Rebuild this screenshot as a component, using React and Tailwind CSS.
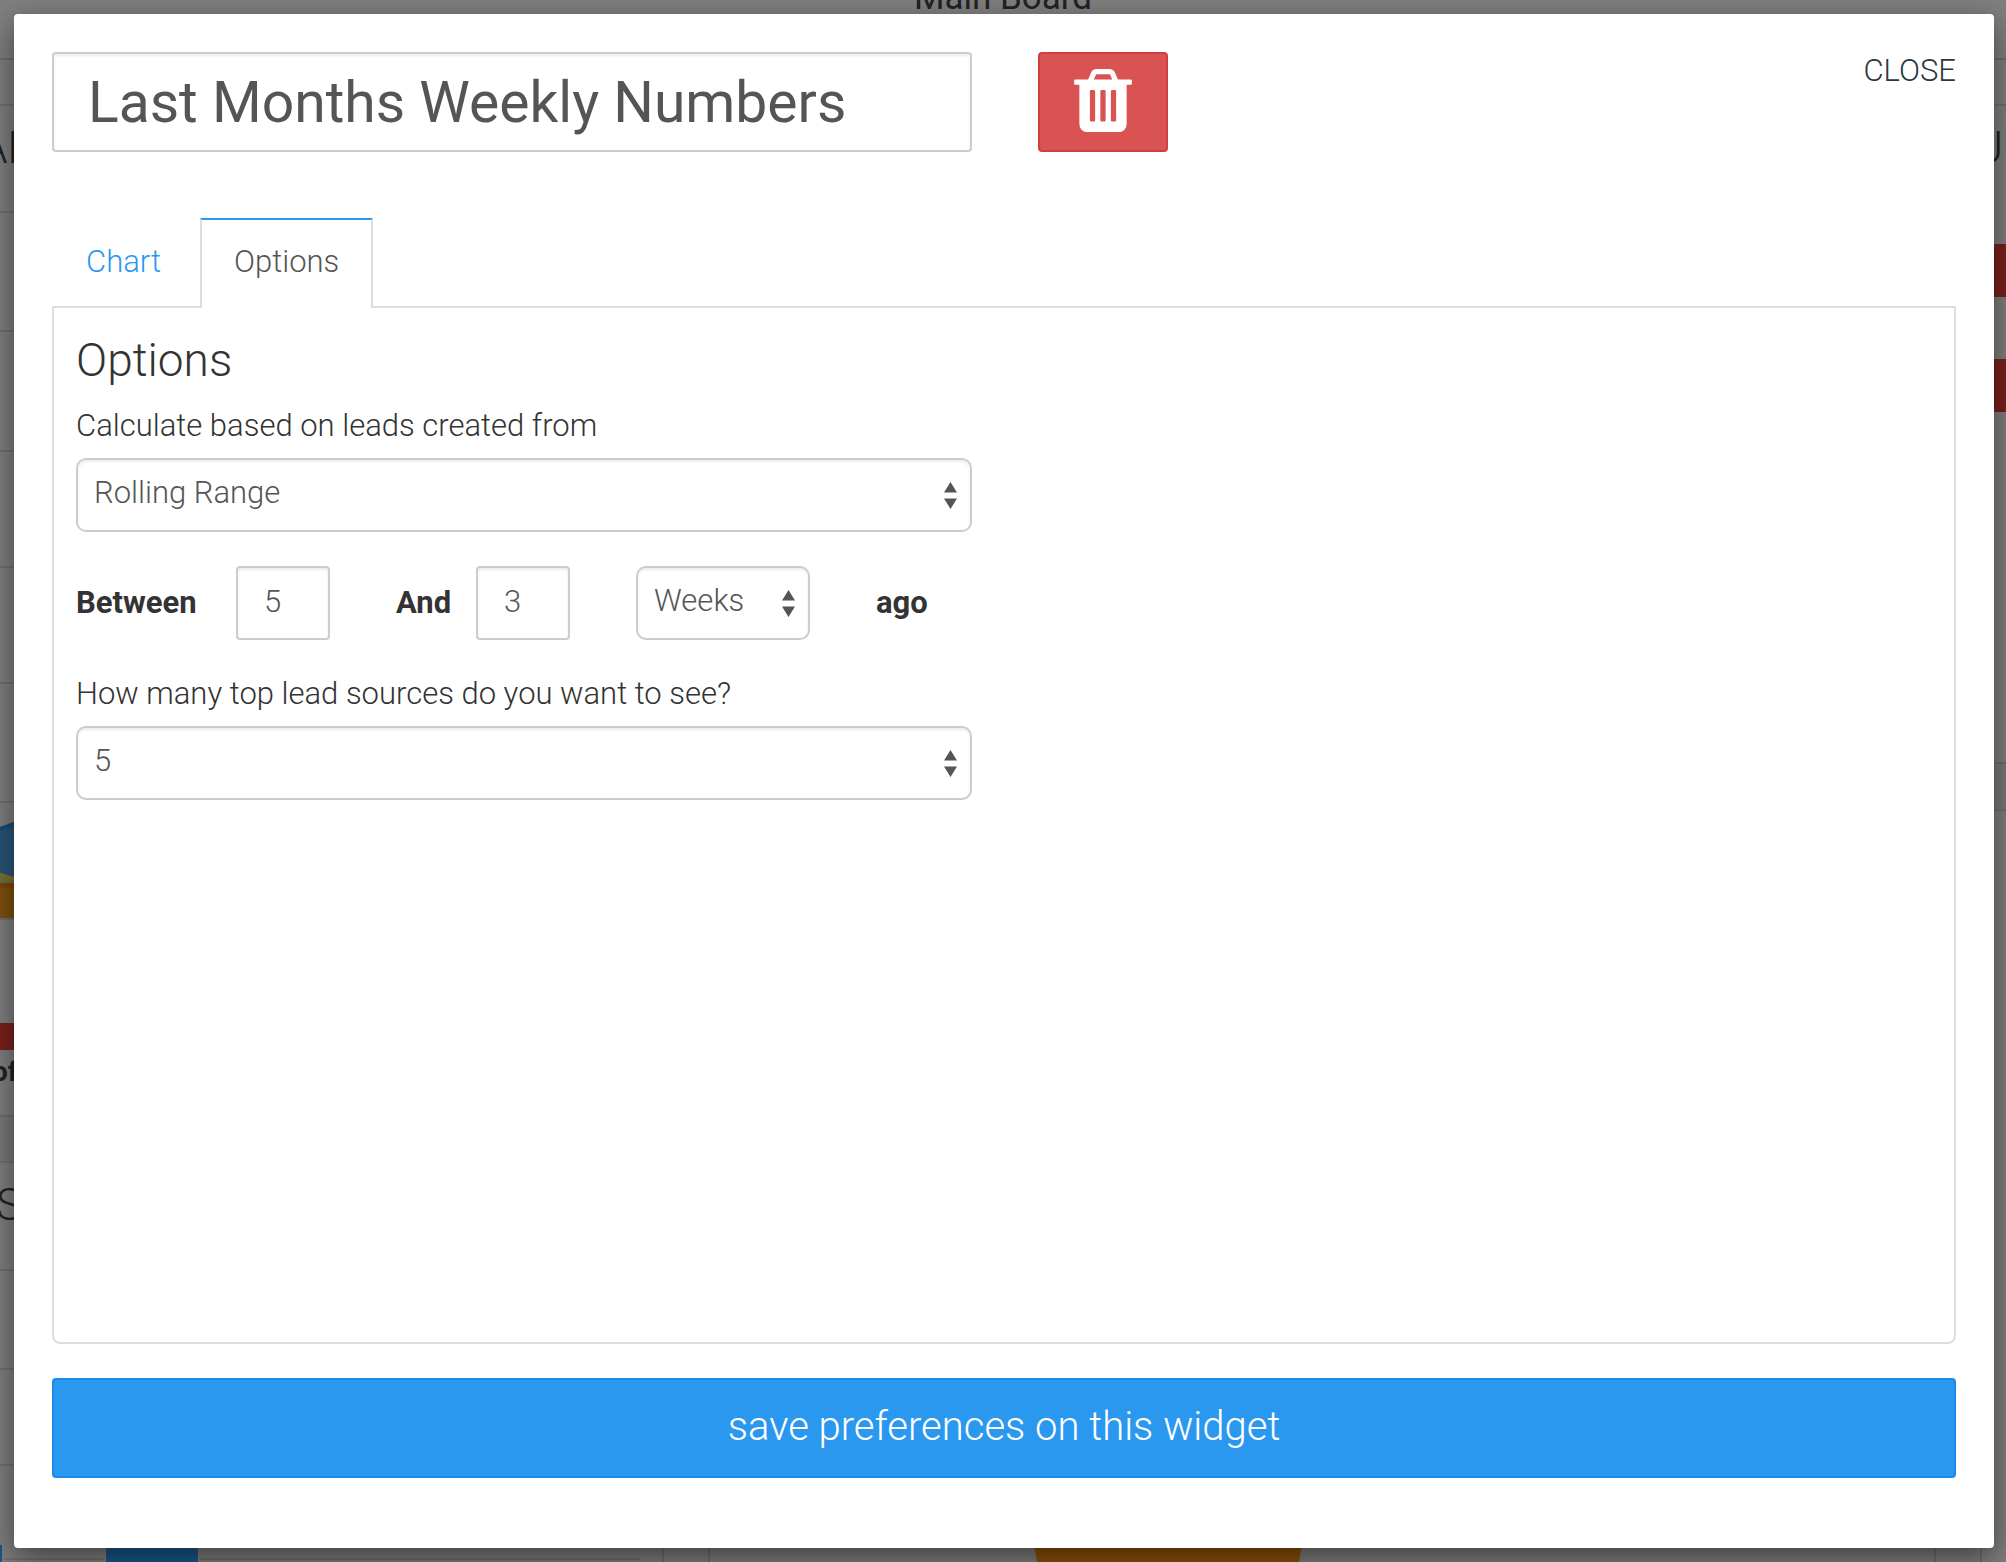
// App.jsx
import React from "react";

const fieldStyle =
  "h-[74px] w-full border-2 border-[#cccccc] bg-white pb-1 text-[31px] font-light text-[#555555] shadow-[inset_0_2px_3px_rgba(0,0,0,0.08)] outline-none";

const TrashIcon = () => (
  <svg viewBox="192 128 1408 1536" className="h-[63px] w-[58px]" fill="currentColor" aria-hidden="true">
    <path d="M704 1376v-704q0-14-9-23t-23-9h-64q-14 0-23 9t-9 23v704q0 14 9 23t23 9h64q14 0 23-9t9-23zm256 0v-704q0-14-9-23t-23-9h-64q-14 0-23 9t-9 23v704q0 14 9 23t23 9h64q14 0 23-9t9-23zm256 0v-704q0-14-9-23t-23-9h-64q-14 0-23 9t-9 23v704q0 14 9 23t23 9h64q14 0 23-9t9-23zm-544-992h448l-48-117q-7-9-17-11h-317q-10 2-17 11zm928 32v64q0 14-9 23t-23 9h-96v948q0 83-47 143.5t-113 60.5h-832q-66 0-113-58.5t-47-141.5v-952h-96q-14 0-23-9t-9-23v-64q0-14 9-23t23-9h309l70-167q15-37 54-63t79-26h320q40 0 79 26t54 63l70 167h309q14 0 23 9t9 23z" />
  </svg>
);

const Select = ({ id, label, options }) => (
  <div className="relative w-full">
    <select
      id={id}
      aria-label={label}
      className={`${fieldStyle} appearance-none rounded-[10px] pl-4 pr-10`}
    >
      {options.map((option) => (
        <option key={option}>{option}</option>
      ))}
    </select>
    <svg
      viewBox="0 0 13 27"
      className="pointer-events-none absolute right-[15px] top-6 h-[27px] w-[13px]"
      fill="#555555"
      aria-hidden="true"
    >
      <path d="M6.500 0L13 10.500H0zM0 16.500H13L6.500 27z" />
    </svg>
  </div>
);

// The dashboard that shows around the edges of the dialog
const Board = () => (
  <div className="absolute inset-0 flex flex-col overflow-hidden bg-[#7f7f7f] text-[#222222]" aria-hidden="true">
    <div className="flex h-[60px] shrink-0 justify-center border-b-2 border-[#6f6f6f]">
      <span className="-mt-6 text-[35px] leading-[44px]">Main Board</span>
    </div>
    <div className="h-[46px] shrink-0 border-b-2 border-[#6f6f6f]" />
    <div className="flex h-[1439px] shrink-0 justify-between">
      <div className="w-3.5 overflow-hidden">
        <div className="h-[107px] border-b-2 border-[#6f6f6f] pt-4">
          <span className="-ml-5 block w-20 text-[44px] font-light leading-[52px]">AD</span>
        </div>
        <div className="h-[119px] border-b-2 border-[#6f6f6f]" />
        <div className="h-[120px] border-b-2 border-[#6f6f6f]" />
        <div className="h-[116px] border-b-2 border-[#6f6f6f]" />
        <div className="h-[116px] border-b-2 border-[#6f6f6f]" />
        <div className="h-[119px] border-b-2 border-[#6f6f6f]" />
        <svg viewBox="0 0 14 117" className="block h-[117px] w-3.5">
          <path d="M0 24L14 19V75L0 70z" fill="#2a5578" />
          <path d="M0 24L14 19V23L0 28z" fill="#134d7c" />
          <path d="M0 70L14 74V82H0z" fill="#6b7242" />
          <path d="M0 70L14 74V78L0 73z" fill="#86741f" />
          <path d="M0 80H14V115H0z" fill="#7f500f" />
          <path d="M0 80H14V85H0z" fill="#7d4708" />
          <path d="M0 115H14V117H0z" fill="#6f6f6f" />
        </svg>
        <div className="h-[197px] border-b-2 border-[#6f6f6f] pt-[103px]">
          <div className="h-[27px] bg-[#7b201c]" />
          <span className="-ml-2 block w-12 text-[28px] font-bold leading-[44px]">of</span>
        </div>
        <div className="h-[46px] border-b-2 border-[#6f6f6f] bg-[#7a7a7a]" />
        <div className="h-[108px] border-b-2 border-[#6f6f6f] pt-4">
          <span className="-ml-1 block text-[44px] font-light leading-[52px]">S</span>
        </div>
        <div className="h-[99px] border-b-2 border-[#6f6f6f]" />
        <div className="h-[96px] border-b-2 border-[#6f6f6f]" />
      </div>
      <div className="w-3 overflow-hidden pt-4">
        <span className="-ml-5 block text-[44px] font-light leading-[52px]">U</span>
        <div className="mt-[70px] h-[53px] bg-[#7b201c]" />
        <div className="mt-[62px] h-[53px] bg-[#7b201c]" />
        <div className="mt-[350px] h-[49px] border-y-2 border-[#6f6f6f] bg-[#7a7a7a]" />
      </div>
    </div>
    <div className="flex h-[17px] shrink-0">
      <div className="flex w-[710px] border-r-2 border-[#6f6f6f]">
        <div className="flex w-[664px] border-r-2 border-[#6f6f6f]">
          <div className="w-0.5 bg-[#19588c]" />
          <div className="ml-0.5 h-[15px] w-[99px] border-b-2 border-[#6f6f6f]" />
          <div className="ml-[3px] w-[92px] bg-[#19588c]" />
          <div className="ml-0.5 h-[15px] w-[440px] border-b-2 border-[#6f6f6f]" />
        </div>
      </div>
      <svg viewBox="0 0 268 17" className="ml-[324px] h-[17px] w-[268px]">
        <path d="M0 0H268L265 17H3z" fill="#8a5208" />
      </svg>
      <div className="ml-auto mr-6 w-12 border-x-2 border-[#6f6f6f]" />
    </div>
  </div>
);

const App = () => {
  return (
    <div className="relative flex min-h-screen py-3.5 pl-3.5 pr-3 font-['Roboto',sans-serif] text-[#333333]">
      <Board />
      <div
        role="dialog"
        aria-label="Widget settings"
        className="relative flex flex-1 flex-col rounded-[4px] bg-white px-[38px] pb-[70px] pt-[38px] shadow-[0_10px_30px_rgba(0,0,0,0.5)]"
      >
        <div className="flex items-start">
          <div className="w-1/2 pr-8">
            <input
              type="text"
              aria-label="Widget name"
              defaultValue="Last Months Weekly Numbers"
              className="h-[100px] w-full rounded-[4px] border-2 border-[#cccccc] px-[34px] text-[57px] text-[#555555] shadow-[inset_0_2px_3px_rgba(0,0,0,0.08)] outline-none"
            />
          </div>
          <button
            aria-label="Delete widget"
            className="ml-[34px] flex h-[100px] w-[130px] items-center justify-center rounded-[4px] border-2 border-[#d13e3d] bg-[#d85352] pb-1 text-white"
          >
            <TrashIcon />
          </button>
          <button className="ml-auto text-[31px] font-light leading-[38px] text-[#2b3742]">
            CLOSE
          </button>
        </div>

        <div className="relative z-10 -mb-0.5 mt-[66px] flex text-[31px] font-light leading-[44px]" role="tablist">
          <button role="tab" aria-selected="false" className="h-[90px] w-[148px] pb-0.5 pl-[34px] text-left text-[#2b98f0]">
            Chart
          </button>
          <button
            role="tab"
            aria-selected="true"
            className="h-[90px] border-x-2 border-t-2 border-x-[#dddddd] border-t-[#2b98f0] bg-white px-8 pb-1 text-[#555555]"
          >
            Options
          </button>
        </div>

        <div className="flex-1 rounded-b-[8px] border-2 border-[#dddddd]" role="tabpanel">
          <div className="w-1/2 pb-8 pl-[22px] pr-8 pt-6">
            <h4 className="text-[46px] font-light leading-[56px]">Options</h4>
            <label htmlFor="range" className="mb-2.5 mt-4 block text-[31px] font-light leading-[44px]">
              Calculate based on leads created from
            </label>
            <Select id="range" options={["Rolling Range", "Fixed Range"]} />

            <div className="mt-[34px] flex items-center text-[31px]">
              <label htmlFor="from" className="w-40 shrink-0 font-bold">
                Between
              </label>
              <div className="w-40 shrink-0">
                <input id="from" type="text" defaultValue="5" className={`${fieldStyle} max-w-[94px] rounded-[4px] px-[26px]`} />
              </div>
              <label htmlFor="to" className="w-20 shrink-0 font-bold">
                And
              </label>
              <div className="w-40 shrink-0">
                <input id="to" type="text" defaultValue="3" className={`${fieldStyle} max-w-[94px] rounded-[4px] px-[26px]`} />
              </div>
              <div className="w-60 shrink-0 pr-[66px]">
                <Select id="unit" label="Unit" options={["Weeks", "Days", "Months"]} />
              </div>
              <span className="font-bold">ago</span>
            </div>

            <label htmlFor="sources" className="mb-2.5 mt-8 block text-[31px] font-light leading-[44px]">
              How many top lead sources do you want to see?
            </label>
            <Select id="sources" options={["5", "10", "15"]} />
          </div>
        </div>

        <button className="mt-[34px] h-[100px] w-full rounded-[4px] border-2 border-[#1a8bec] bg-[#2b98f0] pb-0.5 text-[40px] font-light text-white">
          save preferences on this widget
        </button>
      </div>
    </div>
  );
};

export default App;
